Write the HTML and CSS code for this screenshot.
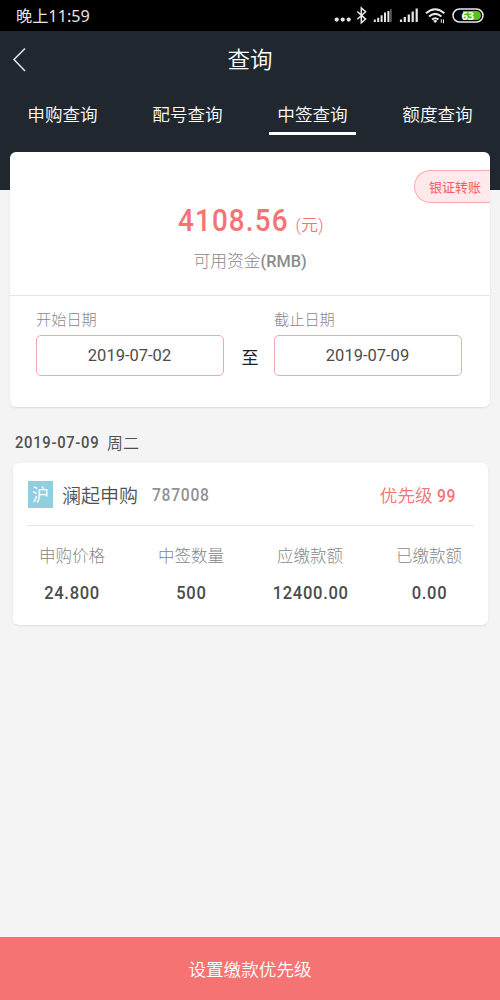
FILE: index.html
```html
<!DOCTYPE html>
<html lang="zh-CN">
<head>
<meta charset="utf-8">
<title>查询</title>
<link rel="stylesheet" href="styles.css">
</head>
<body>
<div class="app">
  <div class="status">
    <span class="time">晚上11:59</span>
    <svg class="status-icons" width="152" height="24" viewBox="334 4 152 24">
      <g fill="#e8e8e8"><circle cx="336.700" cy="19.600" r="2.100"/><circle cx="342.700" cy="19.600" r="2.100"/><circle cx="348.700" cy="19.600" r="2.100"/></g>
      <path d="M357.300 11.500l8.300 7.600-4.300 3.700V8l4.300 3.700-8.300 7.600" fill="none" stroke="#e8e8e8" stroke-width="1.500"/>
      <path d="M374.800 22v-2.500M378.200 22v-4.300M381.600 22v-6.700M385 22v-9.500M388.400 22V11" stroke="#e8e8e8" stroke-width="2"/>
      <path d="M390.900 22V9" stroke="#555" stroke-width="1.800"/>
      <path d="M401 22v-2.500M404.800 22v-5M408.800 22v-7.500M412.700 22v-10.500M416.700 22V8.500" stroke="#e8e8e8" stroke-width="2.200"/>
      <g fill="none" stroke="#e8e8e8" stroke-width="2"><path d="M426 13.200q9.200-8 18.400 0M429 16.500q6.200-5.200 12.400 0M432 19.500q3.200-2.600 6.400 0"/></g>
      <path d="M433 20.700q2.200-1.400 4.400 0l-2.200 2.300z" fill="#e8e8e8"/>
      <path d="M441.300 22.800v-3.600M443.500 19.500v3.800" stroke="#e8e8e8" stroke-width="1"/>
      <rect x="453" y="9" width="30" height="13" rx="6.500" fill="none" stroke="#e8e8e8" stroke-width="1.500"/>
      <path d="M463 11h13.500a4.500 4.500 0 0 1 0 9H463z" fill="#52c41a"/>
      <text x="461.500" y="19.500" class="battery">63</text>
    </svg>
  </div>
  <header class="header">
    <div class="titlebar">
      <svg class="back" width="14" height="26" viewBox="0 0 14 26"><path d="M13 1.500L2 12.500l11 11.500" fill="none" stroke="#dfe1e3" stroke-width="1.600"/></svg>
      <h1 class="title">查询</h1>
    </div>
    <nav class="tabs">
      <a class="tab">申购查询</a>
      <a class="tab">配号查询</a>
      <a class="tab active">中签查询</a>
      <a class="tab">额度查询</a>
    </nav>
  </header>
  <main class="main">
    <section class="funds">
      <div class="balance">
        <a class="transfer">银证转账</a>
        <div class="amount"><span class="number din">4108.56</span><span class="unit">(元)</span></div>
        <div class="caption">可用资金<span class="latin">(RMB)</span></div>
      </div>
      <div class="range">
        <div class="field"><label class="label">开始日期</label><div class="date">2019-07-02</div></div>
        <span class="to">至</span>
        <div class="field"><label class="label">截止日期</label><div class="date">2019-07-09</div></div>
      </div>
    </section>
    <h2 class="day"><span class="day-date din">2019-07-09</span>周二</h2>
    <section class="record">
      <div class="record-head">
        <span class="market">沪</span>
        <span class="name">澜起申购</span>
        <span class="code din">787008</span>
        <span class="priority">优先级 <b class="rank din">99</b></span>
      </div>
      <div class="stats">
        <div class="stat"><span class="key">申购价格</span><span class="value din">24.800</span></div>
        <div class="stat"><span class="key">中签数量</span><span class="value din">500</span></div>
        <div class="stat"><span class="key">应缴款额</span><span class="value din">12400.00</span></div>
        <div class="stat"><span class="key">已缴款额</span><span class="value din">0.00</span></div>
      </div>
    </section>
  </main>
  <footer class="submit">设置缴款优先级</footer>
</div>
</body>
</html>
```
FILE: styles.css
```css
* { box-sizing: border-box; }
body { margin: 0; font-family: Roboto, "Noto Sans CJK SC", sans-serif; }
.app { width: 500px; height: 1000px; display: flex; flex-direction: column; background: #f4f4f4; overflow: hidden; }
.status { height: 31px; flex: none; background: #000; display: flex; justify-content: space-between; padding: 4px 14px 0 16px; }
.time { font: 16.2px/25px "Noto Sans", "Noto Sans CJK SC", sans-serif; color: #e4e4e4; }
.battery { font: bold 11px "Noto Sans", sans-serif; fill: #fff; }
/* narrow, loosely spaced figures */
.din { display: inline-block; font-weight: 500; transform: scaleX(.87); transform-origin: 0 50%; letter-spacing: .8px; }
.header { height: 159px; flex: none; background: #20272f; color: #fff; }
.titlebar { height: 57px; display: flex; align-items: center; padding-left: 12px; }
.back { flex: none; }
.title { flex: 1; margin: 2px 26px 0 0; text-align: center; font-size: 22.5px; font-weight: 350; line-height: 57px; }
.tabs { display: grid; grid-template-columns: repeat(4, 125px); }
.tab { justify-self: center; width: 87px; height: 47px; line-height: 54px; text-align: center; font-size: 17.6px; font-weight: 350; white-space: nowrap; }
.tab.active { border-bottom: 3px solid #fff; }
.main { flex: 1; margin-top: -38px; }
.funds { height: 255px; margin: 0 10px; background: #fff; border-radius: 6px; box-shadow: 0 1px 2px rgba(0,0,0,.1); }
.balance { height: 144px; border-bottom: 1px solid #e6e6e6; padding-top: 18px; display: flex; flex-direction: column; }
.transfer { align-self: flex-end; width: 76px; height: 33px; border: 1px solid #f9a9ac; border-right: 0; border-radius: 17px 0 0 17px; background: #ffe9ea; color: #f55b65; font-size: 13px; line-height: 33px; padding-left: 14px; }
.amount { height: 34px; display: flex; justify-content: center; align-items: baseline; color: #f57373; line-height: 34px; }
.number { font-size: 32px; letter-spacing: 1.3px; margin-left: 2px; margin-right: -10px; }
.unit { font-size: 17px; font-weight: 350; }
.caption { text-align: center; font-size: 16.8px; line-height: 24px; margin-top: 12px; color: #8c8c8c; font-weight: 300; }
.latin { font-size: 16.3px; font-weight: 500; }
.range { display: flex; padding: 12px 28px 0 26px; justify-content: space-between; }
.field { width: 188px; }
.label { display: block; font-size: 15.2px; line-height: 24px; color: #888; font-weight: 300; }
.date { height: 41px; margin-top: 3px; border: 1px solid #f0aaaa; border-radius: 5px; text-align: center; line-height: 40px; padding-right: 1px; font-size: 16.5px; color: #4c4c4c; }
.to { font-size: 17px; line-height: 42px; margin: 29px -1px 0 1px; color: #222; }
.day { margin: 19px 15px 0; display: flex; align-items: center; height: 31px; font-size: 16px; font-weight: 350; color: #505050; }
.day-date { width: 92px; font-size: 17px; letter-spacing: .8px; white-space: nowrap; }
.record { height: 162px; margin: 6px 12px 0 13px; background: #fff; border-radius: 6px; box-shadow: 0 1px 2px rgba(0,0,0,.08); padding: 0 14px; }
.record-head { height: 63px; border-bottom: 1px solid #e6e6e6; display: flex; align-items: center; padding: 1px 18px 0 1px; }
.market { width: 25px; height: 27px; background: #92cedf; color: #fff; font-size: 17px; line-height: 29px; text-align: center; }
.name { margin-left: 9px; font-size: 19px; color: #505050; font-weight: 350; }
.code { margin-left: 14px; font-size: 18px; color: #929292; }
.priority { margin-left: auto; margin-right: -3px; font-size: 17.6px; color: #f57373; font-weight: 350; }
.rank { font-size: 18px; }
.stats { display: flex; justify-content: space-between; padding: 18px 12px 0; }
.stat { width: 66px; display: flex; flex-direction: column; align-items: center; white-space: nowrap; }
.key { font-size: 16.5px; line-height: 26px; color: #888; font-weight: 300; }
.value { font-size: 19px; line-height: 24px; margin: 11px 0 0 1px; transform-origin: 50% 50%; color: #4c4c4c; }
.submit { height: 63px; flex: none; background: #f57373; color: #fff; text-align: center; font-size: 17.6px; font-weight: 350; line-height: 66px; }
```
